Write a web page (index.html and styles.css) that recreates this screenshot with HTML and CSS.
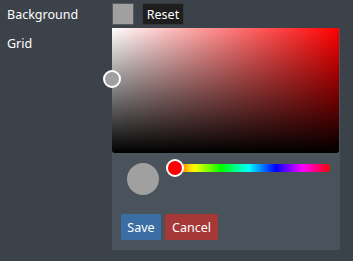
FILE: index.html
```html
<!DOCTYPE html>
<html>
<head>
<meta charset="utf-8">
<link rel="stylesheet" href="styles.css">
</head>
<body>
<div class="settings">
  <div class="row">
    <span class="label">Background</span>
    <div class="controls">
      <span class="swatch"></span>
      <button class="reset">Reset</button>
    </div>
    <div class="popup">
      <div class="sat">
        <span class="sat-thumb"></span>
      </div>
      <div class="picker-row">
        <span class="preview"></span>
        <div class="hue">
          <span class="hue-thumb"></span>
        </div>
      </div>
      <div class="buttons">
        <button class="btn save">Save</button>
        <button class="btn cancel">Cancel</button>
      </div>
    </div>
  </div>
  <div class="row">
    <span class="label">Grid</span>
  </div>
</div>
</body>
</html>
```
FILE: styles.css
```css
html, body {
  margin: 0;
  padding: 0;
  background: #3c4249;
  width: 353px;
  height: 261px;
  overflow: hidden;
  font-family: "Noto Sans", "Open Sans", sans-serif;
  font-size: 12.5px;
  color: #ffffff;
}
.settings {
  display: flex;
  flex-direction: column;
  padding-top: 3px;
}
.row {
  position: relative;
  display: flex;
  align-items: center;
  height: 22px;
  margin-bottom: 7px;
}
.label {
  width: 105px;
  padding-left: 7px;
}
.controls {
  display: flex;
  gap: 8px;
  align-items: center;
}
.swatch {
  width: 20px;
  height: 20px;
  background: #a0a0a0;
  border: 1px solid #5a5a5a;
}
.reset {
  height: 22px;
  width: 42px;
  padding: 0;
  background: #1e1e1e;
  border: 1px solid #393939;
  border-radius: 2px;
  color: #fff;
  font-family: inherit;
  font-size: 12.5px;
}
.popup {
  position: absolute;
  left: 112px;
  top: 25px;
  width: 228px;
  background: #4a535b;
  z-index: 2;
  display: flex;
  flex-direction: column;
  padding-bottom: 10px;
}
.sat {
  position: relative;
  height: 125px;
  margin-right: 1px;
  border-radius: 0 0 3px 3px;
  background:
    linear-gradient(to top, #000, rgba(0,0,0,0)),
    linear-gradient(to right, #fff, #ff0000);
}
.sat-thumb {
  position: absolute;
  left: -9px;
  top: 42px;
  width: 14px;
  height: 14px;
  border: 2px solid #fff;
  border-radius: 50%;
  background: #a0a0a0;
}
.picker-row {
  display: flex;
  align-items: flex-start;
  padding: 10px 10px 0 15px;
}
.preview {
  width: 32px;
  height: 32px;
  border-radius: 50%;
  background: #a0a0a0;
}
.hue {
  position: relative;
  flex: 1;
  height: 8px;
  margin-left: 8px;
  margin-top: 1px;
  border-radius: 4px;
  background: linear-gradient(to right, #ff0000, #ffff00, #00ff00, #00ffff, #0000ff, #ff00ff, #ff0000);
}
.hue-thumb {
  position: absolute;
  left: -1px;
  top: -5px;
  width: 14px;
  height: 14px;
  border: 2px solid #fff;
  border-radius: 50%;
  background: #ff0000;
}
.buttons {
  display: flex;
  gap: 4px;
  padding-left: 9px;
  margin-top: 19px;
}
.btn {
  height: 26px;
  padding: 0;
  border: none;
  border-radius: 2px;
  color: #fff;
  font-family: inherit;
  font-size: 12.5px;
}
.save {
  width: 40px;
  background: #3a6ea5;
}
.cancel {
  width: 53px;
  background: #a63838;
}
```
